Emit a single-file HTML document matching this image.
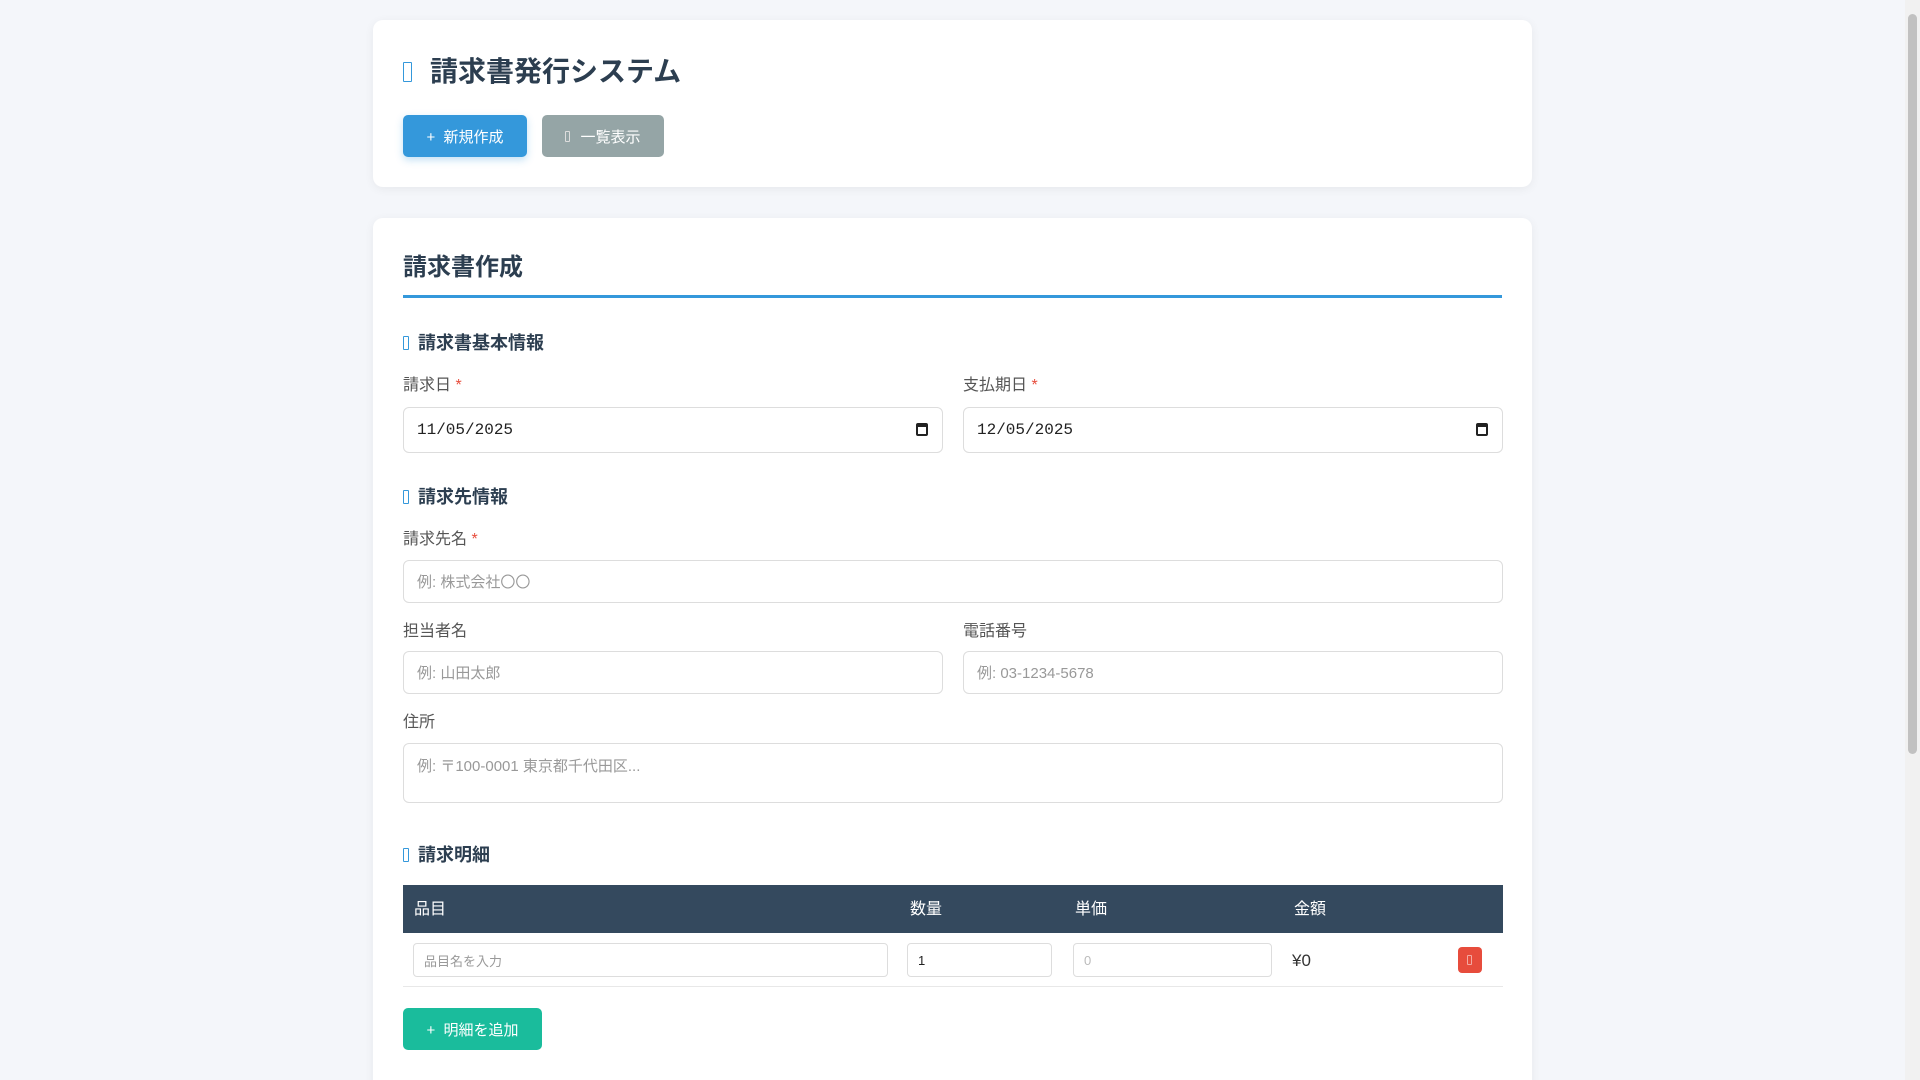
<!DOCTYPE html>
<html><head><meta charset="utf-8"><style>
*{box-sizing:border-box;margin:0;padding:0}
html,body{width:1920px;height:1080px;overflow:hidden}
body{background:#f4f6fa;font-family:"Liberation Sans","Noto Sans CJK JP",sans-serif;color:#333;position:relative}
.sb{position:absolute;right:0;top:0;width:15px;height:1080px;background:#f1f1f1}
.sb div{position:absolute;left:3px;top:14px;width:9px;height:740px;background:#c1c1c1;border-radius:5px}
.card{position:absolute;left:373px;width:1159px;background:#fff;border-radius:10px;box-shadow:0 2px 10px rgba(0,0,0,.06)}
.abs{position:absolute}
h1{position:absolute;left:30px;top:38px;font-size:28px;font-weight:bold;color:#2c3e50;line-height:1}
.ico{display:inline-block;border:1.5px solid #3498db;border-radius:1px}
.btn{position:absolute;height:42px;border-radius:5px;color:#fff;font-size:15px;display:flex;align-items:center;justify-content:center}
.lab{position:absolute;font-size:16px;color:#555;line-height:1}
.req{color:#e74c3c}
.sec{position:absolute;left:30px;font-size:18px;font-weight:bold;color:#2c3e50;line-height:1;display:flex;align-items:center;gap:9px}
.in{position:absolute;border:1px solid #ddd;border-radius:6px;background:#fff;font-size:15px;color:#999;padding-left:13px;display:flex;align-items:center}
.date{font-family:"Liberation Mono","DejaVu Sans Mono",monospace;color:#222;font-size:16px}
.cal{position:absolute;right:14px;top:15px;width:12px;height:13px;border:2px solid #222;border-top-width:4px;border-radius:2px}
.th{position:absolute;top:0;color:#fff;font-size:16px;line-height:50px}
</style></head><body>
<div class="sb"><div></div></div>
<div class="card" style="top:20px;height:167px">
<h1><span class="ico" style="width:9px;height:20px;margin-right:18px;vertical-align:-1px"></span>請求書発行システム</h1>
<div class="btn" style="left:30px;top:95px;width:124px;background:#3498db;box-shadow:0 3px 8px rgba(52,152,219,.3)">+&nbsp; 新規作成</div>
<div class="btn" style="left:169px;top:95px;width:122px;background:#95a5a6"><span class="ico" style="width:5px;height:11px;border-color:#ddd;margin-right:10px"></span>一覧表示</div>
</div>
<div class="card" style="top:218px;height:900px">
<div class="abs" style="left:30px;top:38px;font-size:24px;font-weight:bold;color:#2c3e50;line-height:1">請求書作成</div>
<div class="abs" style="left:30px;top:77px;width:1099px;height:3px;background:#3498db"></div>
<div class="sec" style="top:116px"><span class="ico" style="width:6px;height:14px"></span>請求書基本情報</div>
<div class="lab" style="left:30px;top:160px">請求日 <span class="req">*</span></div>
<div class="lab" style="left:590px;top:160px">支払期日 <span class="req">*</span></div>
<div class="in date" style="left:30px;top:189px;width:540px;height:46px">11/05/2025<span class="cal"></span></div>
<div class="in date" style="left:590px;top:189px;width:540px;height:46px">12/05/2025<span class="cal"></span></div>
<div class="sec" style="top:270px"><span class="ico" style="width:6px;height:14px"></span>請求先情報</div>
<div class="lab" style="left:30px;top:314px">請求先名 <span class="req">*</span></div>
<div class="in" style="left:30px;top:342px;width:1100px;height:43px">例: 株式会社〇〇</div>
<div class="lab" style="left:30px;top:406px">担当者名</div>
<div class="lab" style="left:590px;top:406px">電話番号</div>
<div class="in" style="left:30px;top:433px;width:540px;height:43px">例: 山田太郎</div>
<div class="in" style="left:590px;top:433px;width:540px;height:43px">例: 03-1234-5678</div>
<div class="lab" style="left:30px;top:497px">住所</div>
<div class="in" style="left:30px;top:525px;width:1100px;height:60px;align-items:flex-start;padding-top:11px">例: 〒100-0001 東京都千代田区...</div>
<div class="sec" style="top:628px"><span class="ico" style="width:6px;height:14px"></span>請求明細</div>
<div class="abs" style="left:30px;top:667px;width:1100px;height:48px;background:#34495e">
<div class="th" style="left:11px">品目</div><div class="th" style="left:507px">数量</div><div class="th" style="left:672px">単価</div><div class="th" style="left:891px">金額</div></div>
<div class="abs" style="left:30px;top:768px;width:1100px;height:1px;background:#e8e8e8"></div>
<div class="in" style="left:40px;top:725px;width:475px;height:34px;font-size:13px;border-radius:4px;padding-left:10px">品目名を入力</div>
<div class="in" style="left:534px;top:725px;width:145px;height:34px;font-size:13px;border-radius:4px;padding-left:10px;color:#222">1</div>
<div class="in" style="left:700px;top:725px;width:199px;height:34px;font-size:13px;border-radius:4px;padding-left:10px;color:#bbb">0</div>
<div class="abs" style="left:919px;top:733px;font-size:17px;color:#333">¥0</div>
<div class="abs" style="left:1085px;top:729px;width:24px;height:26px;background:#e74c3c;border-radius:4px"><span class="ico" style="position:absolute;left:9px;top:8px;width:5px;height:10px;border-color:#f3a9a1;border-width:1px"></span></div>
<div class="btn" style="left:30px;top:790px;width:139px;height:42px;background:#1abc9c">+&nbsp; 明細を追加</div>
</div>
</body></html>
